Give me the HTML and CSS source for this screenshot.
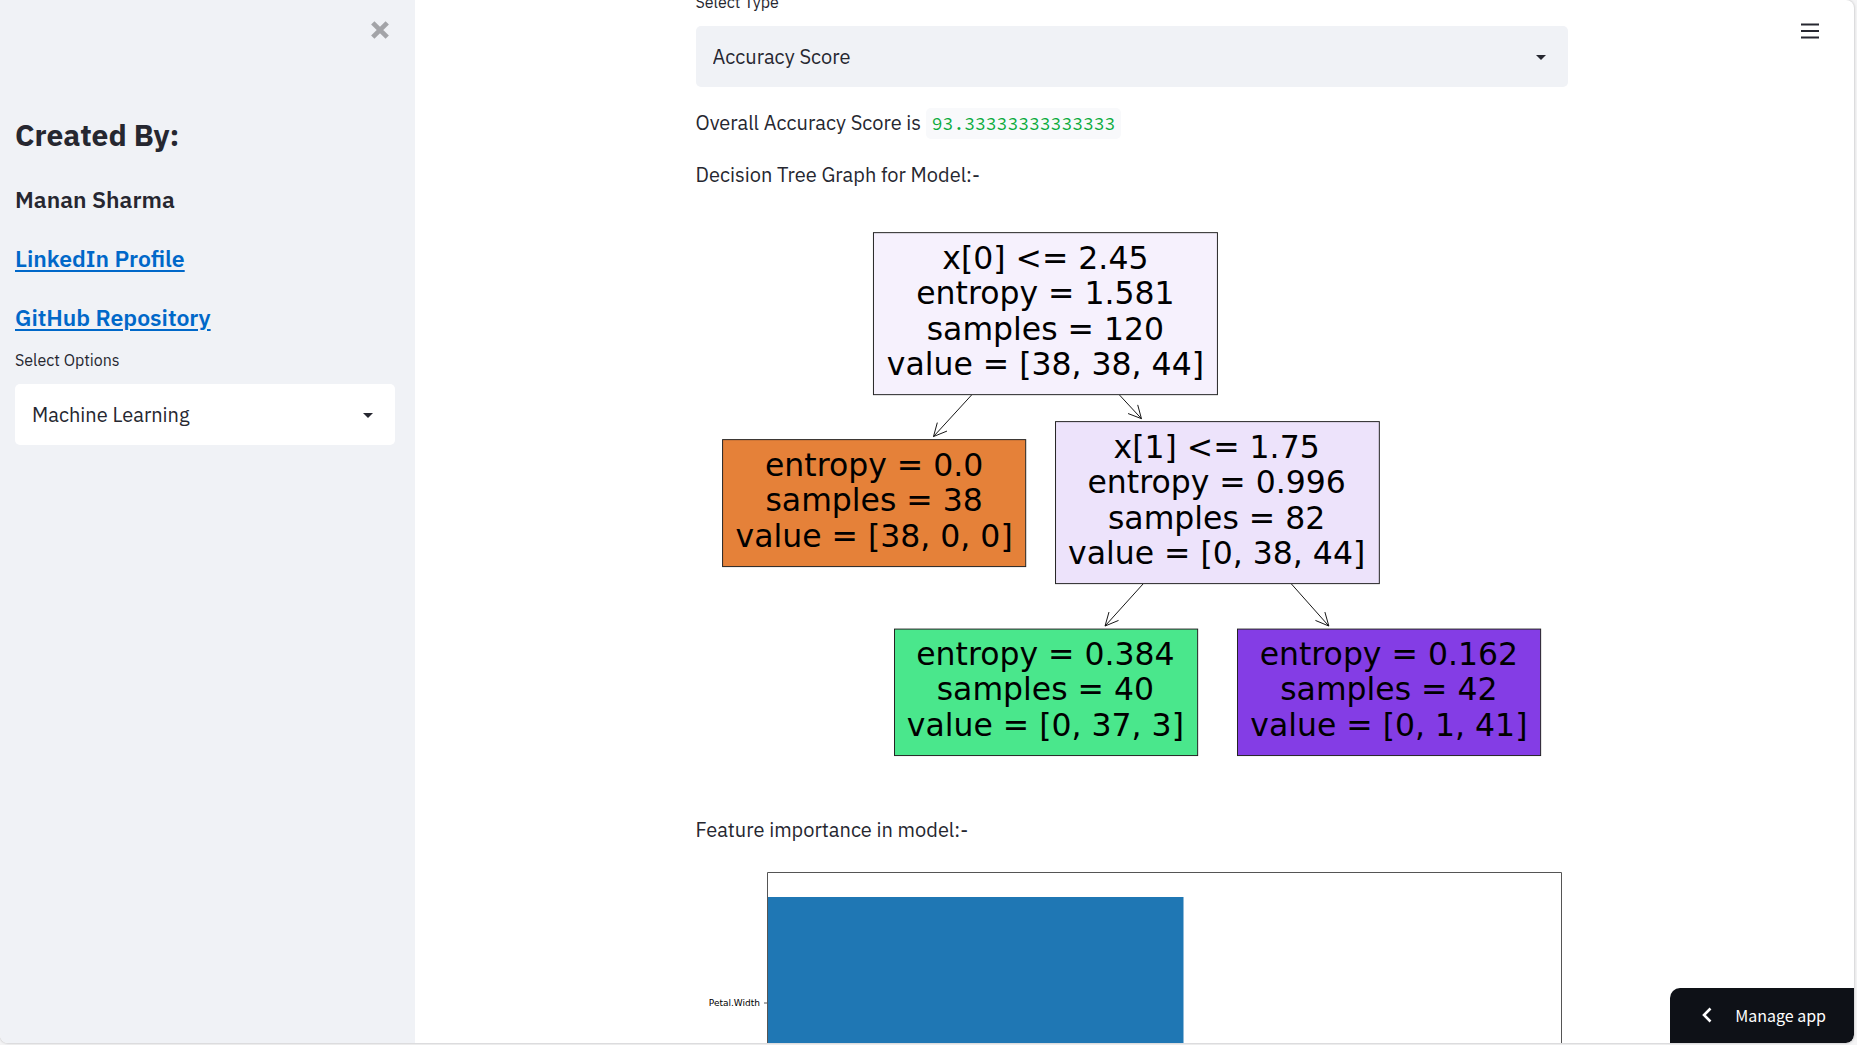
FILE: index.html
```html
<!DOCTYPE html>
<html lang="en">
<head>
<meta charset="utf-8">
<title>Machine Learning</title>
<link rel="stylesheet" href="styles.css">
</head>
<body>
<div class="app">
  <aside class="sidebar">
    <div class="sidebar-top">
      <button class="icon-button close" type="button" aria-label="Close sidebar">
        <svg width="20" height="20" viewBox="0 0 18 18"><path d="M2.5 2.5 15.5 15.5M15.5 2.5 2.5 15.5" fill="none" stroke="currentColor" stroke-width="4.2"/></svg>
      </button>
    </div>
    <h1 class="title">Created By:</h1>
    <h2 class="subtitle">Manan Sharma</h2>
    <h2 class="subtitle"><a href="#linkedin">LinkedIn Profile</a></h2>
    <h2 class="subtitle"><a href="#github">GitHub Repository</a></h2>
    <div class="field">
      <label class="label" for="options">Select Options</label>
      <div class="select-wrap">
        <select class="select select-light" id="options"><option>Machine Learning</option></select>
        <svg class="caret" width="10" height="5" viewBox="0 0 10 5"><path d="M0 0H10L5 5Z" fill="currentColor"/></svg>
      </div>
    </div>
  </aside>

  <main class="main">
    <div class="column">
      <div class="field">
        <label class="label" for="type">Select Type</label>
        <div class="select-wrap">
          <select class="select" id="type"><option>Accuracy Score</option></select>
          <svg class="caret" width="10" height="5" viewBox="0 0 10 5"><path d="M0 0H10L5 5Z" fill="currentColor"/></svg>
        </div>
      </div>
      <p class="text">Overall Accuracy Score is <code class="code">93.33333333333333</code></p>
      <p class="text">Decision Tree Graph for Model:-</p>

      <svg class="figure" viewBox="0 5 886 592" role="img" aria-label="Decision tree">
        <g class="node">
          <rect x="180.3" y="27" width="349.5" height="164.6" fill="#f6f1fd"/>
          <text x="355" y="64">x[0] &lt;= 2.45</text>
          <text x="355" y="100">entropy = 1.581</text>
          <text x="355" y="136">samples = 120</text>
          <text x="355" y="172">value = [38, 38, 44]</text>
        </g>
        <g class="node">
          <rect x="27" y="237.3" width="308" height="129" fill="#e58139"/>
          <text x="181" y="274">entropy = 0.0</text>
          <text x="181" y="310">samples = 38</text>
          <text x="181" y="346">value = [38, 0, 0]</text>
        </g>
        <g class="node">
          <rect x="365.3" y="219" width="329" height="164.6" fill="#ede3fb"/>
          <text x="529" y="256">x[1] &lt;= 1.75</text>
          <text x="529" y="292">entropy = 0.996</text>
          <text x="529" y="328">samples = 82</text>
          <text x="529" y="364">value = [0, 38, 44]</text>
        </g>
        <g class="node">
          <rect x="201.7" y="429.8" width="308" height="128.5" fill="#4ae78c"/>
          <text x="355" y="466">entropy = 0.384</text>
          <text x="355" y="502">samples = 40</text>
          <text x="355" y="538">value = [0, 37, 3]</text>
        </g>
        <g class="node">
          <rect x="550.2" y="429.8" width="308" height="128.5" fill="#843de5"/>
          <text x="704" y="466">entropy = 0.162</text>
          <text x="704" y="502">samples = 42</text>
          <text x="704" y="538">value = [0, 1, 41]</text>
        </g>
        <g class="arrow">
          <path d="M280 192 241.3 234.2M245.2 220 241.3 234.2 255 228.6"/>
          <path d="M430.3 192 452.6 216M448.8 202 452.6 216 439 210.8"/>
          <path d="M454.2 384 415.6 426.7M419.6 412.5 415.6 426.7 429.3 421"/>
          <path d="M605 384 643 426.7M639 412.5 643 426.7 629.4 421"/>
        </g>
      </svg>

      <p class="text">Feature importance in model:-</p>

      <svg class="figure" viewBox="0 15 872 600" role="img" aria-label="Feature importance">
        <rect x="71.5" y="46" width="416" height="212" fill="#1f77b4"/>
        <path class="axis" d="M71.5 21.5H865.5V560H71.5ZM68 152H71"/>
        <text class="tick" x="64" y="155">Petal.Width</text>
      </svg>
    </div>
  </main>

  <button class="icon-button menu" type="button" aria-label="Main menu">
    <svg width="18" height="16" viewBox="0 0 18 16"><path d="M0 1.5H18M0 8H18M0 14.5H18" stroke="currentColor" stroke-width="2"/></svg>
  </button>
  <button class="manage" type="button">
    <svg width="10" height="16" viewBox="0 0 10 16"><path d="M8.5 1.5 2 8 8.5 14.5" fill="none" stroke="currentColor" stroke-width="2.6"/></svg>
    Manage app
  </button>
</div>
</body>
</html>
```
FILE: styles.css
```css
* {
  box-sizing: border-box;
}

body {
  margin: 0;
  height: 100vh;
  padding: 0 3px 2px 0;
  overflow: hidden;
  background: #f4f4f5;
  color: #262730;
  font-family: "IBM Plex Sans", Roboto, sans-serif;
  font-size: 20px;
  line-height: 32px;
}

.app {
  position: relative;
  display: flex;
  height: 100%;
  overflow: hidden;
  border-radius: 0 8px 8px 8px;
  background: #fff;
  box-shadow: 0 0 2px 1px #d4d4d6;
}

.sidebar {
  flex: 0 0 415px;
  padding: 20px 20px 20px 15px;
  background: #f0f2f6;
}

.sidebar-top {
  display: flex;
  justify-content: flex-end;
  height: 95px;
  padding-right: 5px;
}

.icon-button {
  display: flex;
  padding: 0;
  border: 0;
  background: none;
  color: inherit;
  cursor: pointer;
}

.close {
  align-self: flex-start;
  color: #a3a4a8;
}

.title,
.subtitle {
  margin: 0;
  font-weight: 700;
}

.title {
  margin-bottom: 28px;
  font-size: 30px;
  line-height: 40px;
}

.subtitle {
  margin-bottom: 27px;
  font-size: 23px;
  font-weight: 600;
  line-height: 32px;
}

.subtitle a {
  color: #0068c9;
  text-decoration: underline;
  text-decoration-thickness: 2px;
  text-underline-offset: 3px;
}

.subtitle + .field {
  margin-top: -12px;
}

.field {
  display: flex;
  flex-direction: column;
  gap: 12px;
}

.label {
  font-size: 16px;
  line-height: 24px;
}

.select-wrap {
  position: relative;
  display: flex;
}

.select {
  flex: 1;
  height: 61px;
  padding: 0 48px 0 17px;
  border: 0;
  border-radius: 5px;
  appearance: none;
  background: #f0f2f6;
  color: inherit;
  font: inherit;
}

.select-light {
  background: #fff;
}

.caret {
  position: absolute;
  top: 29px;
  right: 22px;
  pointer-events: none;
}

.main {
  flex: 1;
  display: flex;
  justify-content: center;
  align-items: flex-start;
  min-width: 0;
  padding: 0 6px 0 0;
}

.column {
  display: flex;
  flex-direction: column;
  gap: 20px;
  width: 100%;
  max-width: 872px;
  margin-top: -10px;
}

.text {
  margin: 0;
}

.code {
  padding: 4px 6px;
  border-radius: 5px;
  background: #f8f9fb;
  color: #09ab3b;
  font-family: "Source Code Pro", "Liberation Mono", monospace;
  font-size: 18px;
  line-height: 20px;
}

.figure {
  display: block;
  width: 100%;
}

.node rect {
  stroke: #222;
}

.node text {
  font-family: "DejaVu Sans", sans-serif;
  font-size: 32px;
  text-anchor: middle;
}

.arrow path {
  fill: none;
  stroke: #111;
}

.axis {
  fill: none;
  stroke: #555;
}

.tick {
  font-family: "DejaVu Sans", sans-serif;
  font-size: 9px;
  text-anchor: end;
}

.menu {
  position: absolute;
  top: 23px;
  right: 35px;
}

.manage {
  position: absolute;
  right: 0;
  bottom: 0;
  display: flex;
  align-items: center;
  gap: 23px;
  height: 55px;
  padding: 0 28px 2px 32px;
  border: 0;
  border-radius: 10px 0 8px 0;
  background: #0e1117;
  color: #fff;
  font-family: "Source Sans Pro", "Noto Sans CJK SC", sans-serif;
  font-size: 16px;
  line-height: 24px;
  cursor: pointer;
}
```
